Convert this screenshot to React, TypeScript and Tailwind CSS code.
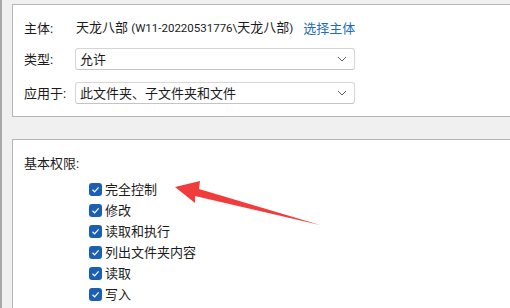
import React from 'react';

const font = { fontFamily: 'Roboto, "Noto Sans CJK SC", "Noto Sans", sans-serif' };

const Chevron: React.FC = () => (
  <svg width="10" height="6" viewBox="0 0 10 6" className="shrink-0">
    <path d="M1 1 L5 5 L9 1" fill="none" stroke="#5f5f5f" strokeWidth="1" />
  </svg>
);

const Dropdown: React.FC<{ value: string }> = ({ value }) => (
  <div className="w-[280px] h-[22px] flex items-center justify-between pl-[4px] pr-[7px] border border-[#d5d5d5] border-b-[#c4c4c4] rounded-[3px] bg-white">
    <span className="text-[13px] leading-none text-[#1b1b1b]">{value}</span>
    <Chevron />
  </div>
);

const Check: React.FC<{ label: string }> = ({ label }) => (
  <div className="h-[21px] flex items-center gap-[3px]">
    <div className="w-[13px] h-[13px] rounded-[3px] bg-[#1a5fb4] flex items-center justify-center">
      <svg width="9" height="9" viewBox="0 0 9 9">
        <path d="M1.5 4.8 L3.6 6.8 L7.6 2.3" fill="none" stroke="white" strokeWidth="1.2" />
      </svg>
    </div>
    <span className="text-[13px] leading-none text-[#1b1b1b]">{label}</span>
  </div>
);

const permissions = ['完全控制', '修改', '读取和执行', '列出文件夹内容', '读取', '写入'];

export default function App() {
  return (
    <div
      className="relative w-[510px] h-[308px] overflow-hidden bg-[#f0f0f0] border-l-2 border-[#a9a9a9] pl-[10px]"
      style={font}
    >
      {/* Principal / type / applies to */}
      <div className="mt-[4px] h-[113px] bg-white border border-r-0 border-[#b6b6b6] pt-[12px] pl-[11px]">
        <div className="h-[22px] flex items-center">
          <span className="w-[52px] text-[13px] leading-none text-[#1b1b1b]">主体:</span>
          <span className="text-[13px] leading-none text-[#1b1b1b]">
            天龙八部 <span className="text-[11.5px]">(W11-20220531776\</span>天龙八部<span className="text-[11.5px]">)</span>
          </span>
          <span className="ml-[10px] text-[13px] leading-none text-[#1d6cbf]">选择主体</span>
        </div>
        <div className="mt-[9px] flex items-center">
          <span className="w-[51px] text-[13px] leading-none text-[#1b1b1b]">类型:</span>
          <Dropdown value="允许" />
        </div>
        <div className="mt-[12px] flex items-center">
          <span className="w-[51px] text-[13px] leading-none text-[#1b1b1b]">应用于:</span>
          <Dropdown value="此文件夹、子文件夹和文件" />
        </div>
      </div>

      {/* Basic permissions */}
      <div className="mt-[22px] h-[200px] bg-white border border-r-0 border-[#b6b6b6] pt-[13px] pl-[11px]">
        <div className="h-[21px] flex items-center text-[13px] leading-none text-[#1b1b1b]">基本权限:</div>
        <div className="mt-[5px] pl-[65px] flex flex-col">
          {permissions.map((p) => (
            <Check key={p} label={p} />
          ))}
        </div>
      </div>

      {/* Annotation arrow */}
      <svg className="absolute left-0 top-0 pointer-events-none" width="510" height="308">
        <polygon
          points="173,187 198,181 197,189 318,225 193,196 193,203"
          fill="#f23c3c"
        />
      </svg>
    </div>
  );
}
